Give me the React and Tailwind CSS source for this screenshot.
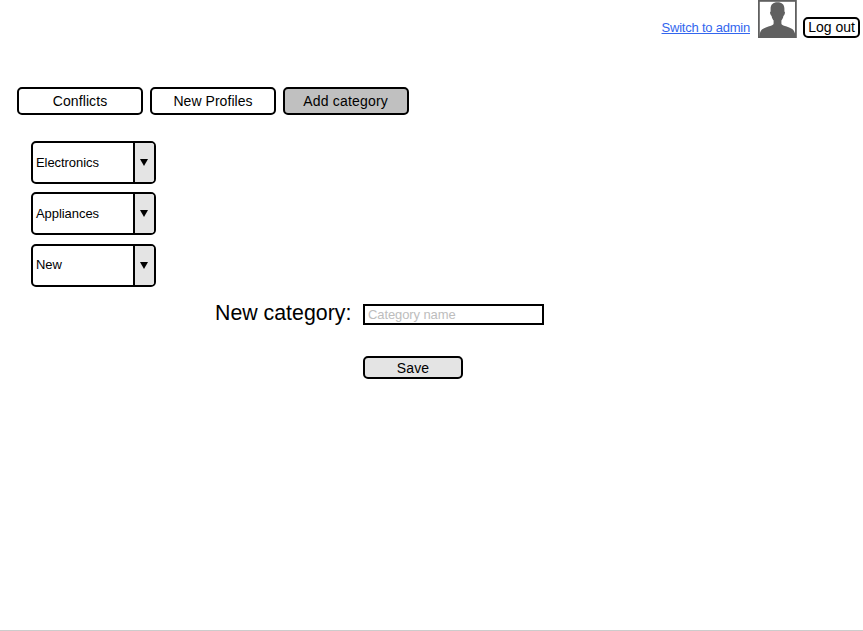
const tabs = [
  { label: "Conflicts", fill: "bg-white", spacing: "tracking-[0.1px]" },
  { label: "New Profiles", fill: "bg-white", spacing: "tracking-[0.05px]" },
  { label: "Add category", fill: "bg-[#c0c0c0]", spacing: "tracking-[0.2px]" },
];

const categories = ["Electronics", "Appliances", "New"];

function Avatar() {
  return (
    <svg width="39" height="38" viewBox="0 0 39 38" className="block shrink-0">
      <rect x="0.900" y="0.900" width="37" height="36.300" fill="#fff" stroke="#606060" strokeWidth="1.800" />
      <path
        d="M19.500 2.200C15 2.200 12.600 4.600 12.600 8.500v3c-.8.3-.7 1.500-.2 2.800.3.900.7 1.500 1.200 1.700.4 2 1 3.300 2 4.500v3c0 1-1 1.600-2.600 2.200-3.600 1.200-7.400 2.100-9.100 3.900C2.200 31.400 1.500 34 1.200 37.500h36.400c-.3-3.500-1-6.100-2.700-7.900-1.700-1.800-5.300-2.700-8.900-3.900-1.600-.6-2.600-1.200-2.600-2.200v-3c1-1.200 1.600-2.500 2-4.500.5-.2.9-.8 1.200-1.700.5-1.300.6-2.500-.2-2.800v-3c0-3.900-2.400-6.300-6.900-6.300z"
        fill="#606060"
      />
    </svg>
  );
}

function CategorySelect({ label }) {
  return (
    <button className="flex h-[43px] w-[125px] overflow-hidden rounded-[5px] border-2 border-black bg-white text-left text-[13px] leading-[15px]">
      <span className="flex h-full flex-1 items-center pb-[0.600px] pl-[3px] tracking-[-0.06px]">{label}</span>
      <span className="flex h-full w-[21px] items-center justify-center border-l-2 border-black bg-[#e4e4e4]">
        <svg width="8" height="7" viewBox="0 0 8 7" className="mr-px block">
          <path d="M0 0h8L4 7z" fill="#000" />
        </svg>
      </span>
    </button>
  );
}

export default function App() {
  return (
    <div className="flex h-[631px] w-[863px] flex-col overflow-hidden border-b border-[#cccccc] bg-white font-['Liberation_Sans',Arial,sans-serif] text-black">
      <header className="flex h-[87px] items-start justify-end pr-[3px]">
        <a href="#" className="mt-5 mr-2 text-[13px] leading-[15px] tracking-[-0.22px] whitespace-nowrap text-[#3366ee] underline">
          Switch to admin
        </a>
        <Avatar />
        <button className="mt-[17px] ml-[6px] flex h-[21px] w-[57px] items-center justify-center rounded-[5px] border-2 border-black pb-px text-sm leading-4 whitespace-nowrap">
          Log out
        </button>
      </header>

      <nav className="flex gap-[7px] pl-[17px]">
        {tabs.map((tab) => (
          <button
            key={tab.label}
            className={`flex h-[28px] w-[126px] items-center justify-center rounded-[5px] border-2 border-black text-sm leading-4 last:-ml-[0.4px] ${tab.fill} ${tab.spacing}`}
          >
            {tab.label}
          </button>
        ))}
      </nav>

      <div className="mt-[26px] flex flex-col gap-[8.400px] pl-[31px]">
        {categories.map((label) => (
          <CategorySelect key={label} label={label} />
        ))}
      </div>

      <form className="mt-[17px] pl-[215px]">
        <div className="flex h-[21px] items-center">
          <label htmlFor="category" className="w-[148px] pb-[3px] text-[21.330px] leading-[24px] whitespace-nowrap">
            New category:
          </label>
          <input
            id="category"
            placeholder="Category name"
            className="h-[21px] w-[181px] border-2 border-black bg-white px-[3px] text-[13px] leading-[15px] tracking-[-0.1px] placeholder:text-[#bdbdbd]"
          />
        </div>
        <button
          type="button"
          className="mt-[31px] ml-[148px] flex h-[23px] w-[100px] items-center justify-center rounded-[5px] border-2 border-black bg-[#e4e4e4] pt-px text-sm leading-4 tracking-[0.2px]"
        >
          Save
        </button>
      </form>
    </div>
  );
}
